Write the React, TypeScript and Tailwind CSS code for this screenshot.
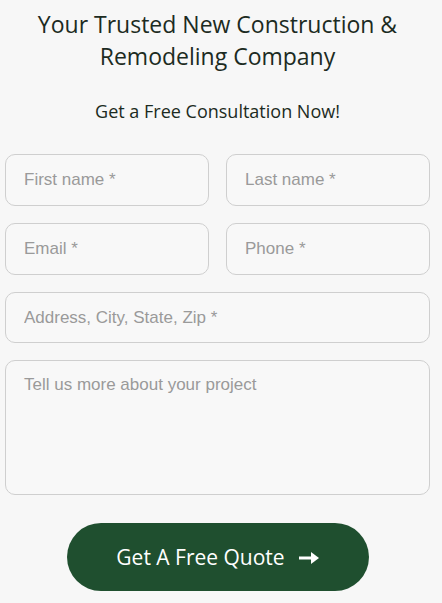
export default function App() {
  const field =
    "w-full h-[52px] rounded-[10px] border border-[#cfcfcf] bg-[#f8f8f8] px-[18px] text-[17px] text-[#333] placeholder:text-[#9a9a9a] outline-none";

  return (
    <div className="min-h-[603px] bg-[#f7f7f7] pl-[5px] pr-[12px]">
      <div className="font-['Open_Sans',sans-serif] text-center text-[#1c2b22]">
        <h1 className="pt-[8px] text-[23px] leading-[32px] font-normal">
          Your Trusted New Construction &amp;
          <br />
          Remodeling Company
        </h1>
        <p className="mt-[26px] text-[18px] leading-[26px]">Get a Free Consultation Now!</p>
      </div>

      <form className="mt-[30px] flex flex-col gap-[17px] font-['Liberation_Sans',Arial,sans-serif]">
        <div className="grid grid-cols-2 gap-[17px]">
          <input className={field} placeholder="First name *" />
          <input className={field} placeholder="Last name *" />
        </div>
        <div className="grid grid-cols-2 gap-[17px]">
          <input className={field} placeholder="Email *" />
          <input className={field} placeholder="Phone *" />
        </div>
        <input className={field + " !h-[51px]"} placeholder="Address, City, State, Zip *" />
        <textarea
          className="w-full h-[135px] resize-none rounded-[10px] border border-[#cfcfcf] bg-[#f8f8f8] px-[18px] py-[13px] text-[17px] leading-[22px] text-[#333] placeholder:text-[#9a9a9a] outline-none"
          placeholder="Tell us more about your project"
        />
        <div className="mt-[11px] flex justify-center">
          <button
            type="button"
            className="flex h-[68px] w-[302px] items-center justify-center gap-[14px] rounded-full bg-[#1f4f2f] pt-[1px] font-['Open_Sans',sans-serif] text-[21px] text-white"
          >
            <span>Get A Free Quote</span>
            <svg width="20" height="14" viewBox="0 0 20 14" fill="white">
              <rect x="0" y="5.5" width="14" height="3" />
              <path d="M12 1 L20 7 L12 13 Z" />
            </svg>
          </button>
        </div>
      </form>
    </div>
  );
}
